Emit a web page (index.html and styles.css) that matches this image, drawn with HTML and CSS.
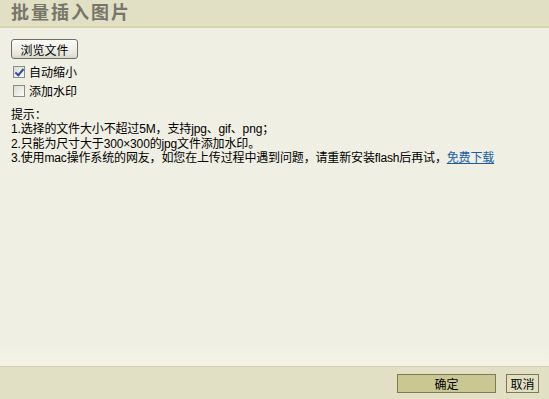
FILE: index.html
```html
<!DOCTYPE html>
<html lang="zh-CN">
<head>
    <meta charset="UTF-8">
    <title>批量插入图片</title>
    <link rel="stylesheet" href="styles.css">
</head>
<body>
    <div class="dialog">
        <div class="dlg-head">批量插入图片</div>
        <div class="dlg-body">
            <button type="button" class="browse-btn">浏览文件</button>
            <label class="opt"><input type="checkbox" checked> 自动缩小</label>
            <label class="opt"><input type="checkbox"> 添加水印</label>
            <div class="tips">
                <p>提示：</p>
                <p>1.选择的文件大小不超过5M，支持jpg、gif、png；</p>
                <p>2.只能为尺寸大于300×300的jpg文件添加水印。</p>
                <p>3.使用mac操作系统的网友，如您在上传过程中遇到问题，请重新安装flash后再试，<a href="#">免费下载</a></p>
            </div>
        </div>
        <div class="dlg-foot">
            <button type="button" class="ok-btn">确定</button>
            <button type="button" class="cancel-btn">取消</button>
        </div>
    </div>
</body>
</html>
```

FILE: styles.css
```css
html, body {
    margin: 0;
    padding: 0;
    height: 100%;
}
body {
    font-family: Tahoma, "Liberation Sans", "Noto Sans CJK SC", sans-serif;
    font-size: 12px;
    color: #000;
    background-color: #efefe3;
}
.dialog {
    display: flex;
    flex-direction: column;
    height: 399px;
}
.dlg-head {
    height: 26px;
    line-height: 26px;
    padding-left: 11px;
    background-color: #e1e0c5;
    border-bottom: 2px solid #d6d5ad;
    color: #77766a;
    font-size: 18px;
    font-weight: bold;
    letter-spacing: 2px;
}
.dlg-body {
    flex: 1;
    padding: 11px 11px 0;
    background: linear-gradient(#efefe3 0, #efefe3 92%, #f4f3e6 100%);
}
.browse-btn {
    display: block;
    width: 67px;
    height: 20px;
    padding: 0;
    font-family: inherit;
    font-size: 12px;
    color: #000;
    background: linear-gradient(#fdfdfb, #e6e5dc 80%, #d5d4c8);
    border: 1px solid #6f6f66;
    border-radius: 3px;
    margin-bottom: 3px;
}
.opt {
    display: flex;
    align-items: center;
    height: 19px;
    margin-left: 2px;
}
.opt input {
    appearance: none;
    position: relative;
    width: 12px;
    height: 12px;
    margin: 0 4px 0 0;
    border: 1px solid #8c8c84;
    background: linear-gradient(135deg, #dcdcd4, #fbfbf9);
}
.opt input:checked::after {
    content: "";
    position: absolute;
    left: 3px;
    top: 0;
    width: 3px;
    height: 7px;
    border: solid #2a4fa8;
    border-width: 0 2px 2px 0;
    transform: rotate(40deg);
}
.tips {
    margin-top: 8px;
    letter-spacing: -0.15px;
}
.tips p {
    margin: 0;
    line-height: 14.4px;
}
.tips a {
    color: #1c5ea8;
    text-decoration: underline;
}
.dlg-foot {
    height: 32px;
    background-color: #e1e0c5;
    border-top: 1px solid #cfceb0;
    display: flex;
    align-items: center;
    justify-content: flex-end;
    padding-right: 10px;
    gap: 10px;
}
.ok-btn, .cancel-btn {
    height: 19px;
    padding: 0;
    font-family: inherit;
    font-size: 12px;
    color: #000;
    border: 1px solid #7a7a58;
    background-color: #c9c892;
}
.ok-btn {
    width: 99px;
}
.cancel-btn {
    width: 33px;
    background-color: #e1e0c5;
}
```
